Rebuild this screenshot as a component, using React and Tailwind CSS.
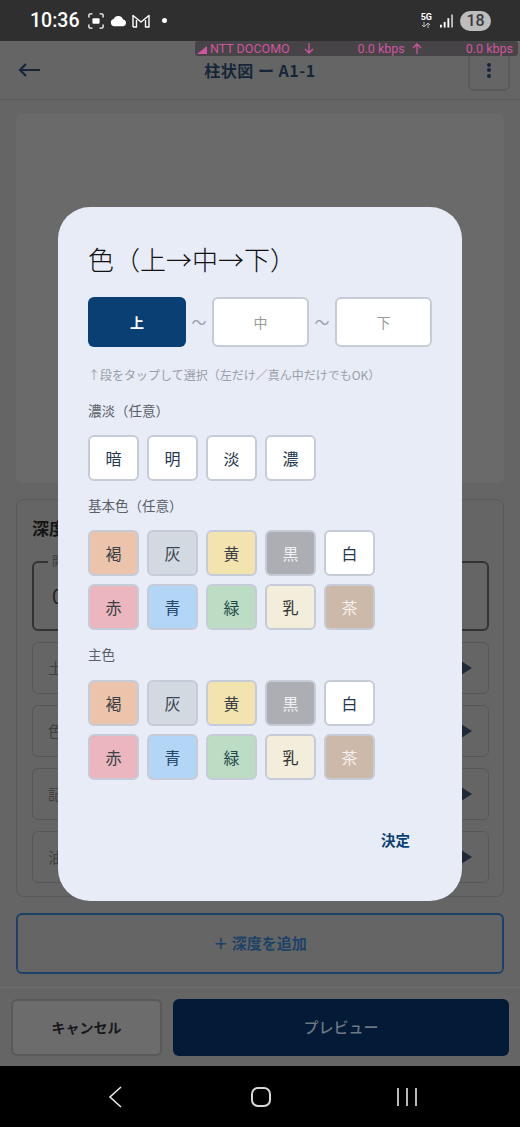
import React from 'react';

const colors = [
  { label: '褐', cls: 'bg-[#ecc4ab] text-[#3a3f47]' },
  { label: '灰', cls: 'bg-[#d3d9e1] text-[#3a4552]' },
  { label: '黄', cls: 'bg-[#f3e3ae] text-[#3a3f47]' },
  { label: '黒', cls: 'bg-[#acaeb3] text-[#eef0f4]' },
  { label: '白', cls: 'bg-white text-[#24384d]' },
  { label: '赤', cls: 'bg-[#ebb6bd] text-[#3a3f47]' },
  { label: '青', cls: 'bg-[#b3d6f6] text-[#24486b]' },
  { label: '緑', cls: 'bg-[#bcdcc4] text-[#24484a]' },
  { label: '乳', cls: 'bg-[#f3eddb] text-[#2f3338]' },
  { label: '茶', cls: 'bg-[#cdb9aa] text-[#f5f1ec]' },
];

function Chip({ label, cls }) {
  return (
    <button className={`w-[51px] h-[46px] rounded-md border-2 border-[#c6ccd7] text-[16px] flex items-center justify-center ${cls}`}>
      {label}
    </button>
  );
}

function ColorGrid() {
  return (
    <div className="grid grid-cols-[repeat(5,51px)] gap-2">
      {colors.map((c) => (
        <Chip key={c.label} label={c.label} cls={c.cls} />
      ))}
    </div>
  );
}

function Row({ label }) {
  return (
    <div className="h-[52px] rounded-md border border-[#575757] flex items-center justify-between pl-[15px] pr-[16px] text-[15px] text-[#404040]">
      <span>{label}</span>
      <svg width="14" height="18" viewBox="0 0 14 18"><path d="M0 0 L14 9 L0 18 Z" fill="#1f2a36" /></svg>
    </div>
  );
}

function StatusBar() {
  return (
    <div className="h-[41px] bg-[#2f2f2f] flex items-center justify-between pl-[30px] pr-[29px] text-white shrink-0 font-['Roboto',sans-serif]">
      <div className="flex items-center">
        <span className="text-[19.5px] font-medium leading-none">10:36</span>
        <svg className="ml-[9px]" width="16" height="16" viewBox="0 0 18 18" fill="none" stroke="white" strokeWidth="1.5">
          <path d="M1 5V2.5A1.5 1.5 0 0 1 2.5 1H5M13 1h2.5A1.5 1.5 0 0 1 17 2.5V5M17 13v2.5a1.5 1.5 0 0 1-1.5 1.5H13M5 17H2.5A1.5 1.5 0 0 1 1 15.5V13" />
          <rect x="5" y="6" width="8" height="6" rx="1" fill="white" stroke="none" />
        </svg>
        <svg className="ml-[6px]" width="17" height="12" viewBox="0 0 18 12" fill="white">
          <path d="M4.5 11.5a3.8 3.8 0 0 1-.6-7.5A5.2 5.2 0 0 1 13.8 4.4 3.6 3.6 0 0 1 14 11.5Z" />
        </svg>
        <svg className="ml-[5px]" width="18" height="14" viewBox="0 0 18 14" fill="none" stroke="white" strokeWidth="1.4">
          <path d="M1 13V1.5L9 8l8-6.5V13h-3.5V6M1 13h3.5V6" strokeLinejoin="round" />
        </svg>
        <span className="ml-[12px] w-[5px] h-[5px] rounded-full bg-white" />
      </div>
      <div className="flex items-center">
        <div className="flex flex-col items-center text-[9px] leading-[9px] font-bold mr-[8px]">
          <span>5G</span>
          <svg width="10" height="6" viewBox="0 0 10 6" fill="none" stroke="#bbbbbb" strokeWidth="1">
            <path d="M3 0v5M1 3l2 2 2-2M7 6V1M5 3l2-2 2 2" />
          </svg>
        </div>
        <svg width="13" height="14" viewBox="0 0 14 14" fill="white" className="mr-[7px]">
          <rect x="0" y="11" width="2" height="3" />
          <rect x="4" y="8" width="2" height="6" />
          <rect x="8" y="4" width="2" height="10" />
          <rect x="12" y="0" width="2" height="14" fill="#bdbdbd" />
        </svg>
        <span className="w-[31px] h-[20px] rounded-full bg-[#bdbdbd] text-[#3a3a3a] text-[16px] font-medium flex items-center justify-center leading-none">18</span>
      </div>
    </div>
  );
}

function Background() {
  return (
    <div className="h-[1025px] bg-[#656565] flex flex-col">
      <div className="h-[59px] border-b border-[#5a5a5a] flex items-center justify-between pl-[18px] pr-[10px] shrink-0">
        <svg width="22" height="14" viewBox="0 0 22 14" fill="none" stroke="#16263a" strokeWidth="2.2">
          <path d="M22 7H2M8 1 2 7l6 6" />
        </svg>
        <span className="ml-[12px] text-[16px] tracking-[0.5px] font-bold text-[#16263a]">柱状図 ー A1-1</span>
        <div className="w-[42px] h-[42px] rounded-md border-2 border-[#5a5a5a] flex flex-col items-center justify-center gap-[1.5px]">
          <span className="w-[4px] h-[4px] rounded-full bg-[#16263a]" />
          <span className="w-[4px] h-[4px] rounded-full bg-[#16263a]" />
          <span className="w-[4px] h-[4px] rounded-full bg-[#16263a]" />
        </div>
      </div>
      <div className="px-[16px] flex flex-col flex-1">
        <div className="mt-[14px] h-[369px] rounded-md bg-[#6a6a6a] shrink-0" />
        <div className="mt-[16px] h-[398px] rounded-lg border border-[#595959] pl-[15px] pr-[14px] shrink-0">
          <div className="text-[17px] leading-[27px] font-bold text-[#141414] mt-[14px] h-[30px]">深度</div>
          <div className="relative mt-[17px] h-[70px] rounded-md border-2 border-[#333333] flex items-center pl-[18px] text-[20px] text-[#222222]">
            0
            <span className="absolute left-[14px] -top-[10px] px-[4px] bg-[#656565] text-[12px] leading-[16px] text-[#3d3d3d]">開始深度</span>
          </div>
          <div className="mt-[11px] flex flex-col gap-[11px]">
            <Row label="土質" />
            <Row label="色" />
            <Row label="記事" />
            <Row label="油" />
          </div>
        </div>
        <div className="mt-[16px] h-[61px] rounded-md border-2 border-[#1d4268] flex items-center justify-center text-[15px] font-bold text-[#1d4268] shrink-0">
          ＋ 深度を追加
        </div>
      </div>
      <div className="mt-[13px] h-[79px] border-t border-[#707070] flex gap-[11px] px-[11px] pt-[11px] shrink-0">
        <div className="w-[151px] h-[57px] rounded-md border-2 border-[#595959] bg-[#6c6c6c] flex items-center justify-center text-[14px] font-bold text-[#16181c]">キャンセル</div>
        <div className="flex-1 h-[57px] rounded-md bg-[#031b36] flex items-center justify-center text-[15px] font-medium text-[#6d7885]">プレビュー</div>
      </div>
    </div>
  );
}

function Dialog() {
  return (
    <div className="absolute left-[58px] top-[207px] w-[404px] h-[694px] rounded-[32px] bg-[#e7ecf7] px-[30px] flex flex-col">
      <h2 className="mt-[32px] h-[40px] text-[26px] leading-[40px] font-light text-[#111111] whitespace-nowrap">色（上→中→下）</h2>
      <div className="mt-[18px] flex items-center">
        <button className="w-[98px] h-[50px] rounded-md bg-[#0a3f73] text-white text-[14px] font-bold">上</button>
        <span className="w-[26px] text-center text-[15px] text-[#9aa1ac]">〜</span>
        <button className="w-[97px] h-[50px] rounded-md border-2 border-[#c6ccd7] bg-white text-[#9a9a9a] text-[14px]">中</button>
        <span className="w-[26px] text-center text-[15px] text-[#9aa1ac]">〜</span>
        <button className="w-[97px] h-[50px] rounded-md border-2 border-[#c6ccd7] bg-white text-[#9a9a9a] text-[14px]">下</button>
      </div>
      <p className="mt-[18px] text-[12px] leading-[20px] text-[#9a9ea6] whitespace-nowrap">↑段をタップして選択（左だけ／真ん中だけでもOK）</p>
      <p className="mt-[15px] text-[13.5px] leading-[20px] text-[#5b6067]">濃淡（任意）</p>
      <div className="mt-[15px] flex gap-2">
        <Chip label="暗" cls="bg-white text-[#24384d]" />
        <Chip label="明" cls="bg-white text-[#24384d]" />
        <Chip label="淡" cls="bg-white text-[#24384d]" />
        <Chip label="濃" cls="bg-white text-[#24384d]" />
      </div>
      <p className="mt-[14px] text-[13.5px] leading-[20px] text-[#5b6067]">基本色（任意）</p>
      <div className="mt-[15px]"><ColorGrid /></div>
      <p className="mt-[14px] text-[13.5px] leading-[20px] text-[#5b6067]">主色</p>
      <div className="mt-[16px]"><ColorGrid /></div>
      <div className="mt-[49px] flex justify-end pr-[22px]">
        <button className="text-[14.5px] leading-[22px] font-bold text-[#0a3f73]">決定</button>
      </div>
    </div>
  );
}

function Arrow({ up }) {
  return (
    <svg width="10" height="11" viewBox="0 0 10 11" fill="none" stroke="#d0559f" strokeWidth="1.3">
      {up ? <path d="M5 11V1M1 5l4-4 4 4" /> : <path d="M5 0v10M1 6l4 4 4-4" />}
    </svg>
  );
}

function NetworkMeter() {
  return (
    <div className="absolute left-[195px] top-[41px] w-[323px] h-[15px] rounded-[3px] bg-[#464446] text-[#d0559f] text-[12.5px] leading-[15px] font-['Roboto',sans-serif] flex items-center pl-[2px] pr-[5px] whitespace-nowrap">
      <svg width="10" height="8" viewBox="0 0 10 8" className="mt-[3px]"><path d="M0 8 10 0V8Z" fill="#d0559f" /></svg>
      <span className="ml-[3px]">NTT DOCOMO</span>
      <span className="ml-[14px]"><Arrow /></span>
      <span className="ml-auto">0.0 kbps</span>
      <span className="ml-[7px]"><Arrow up /></span>
      <span className="ml-[44px]">0.0 kbps</span>
    </div>
  );
}

function NavBar() {
  return (
    <div className="h-[61px] bg-black flex items-center pl-[108px] shrink-0">
      <svg width="14" height="22" viewBox="0 0 14 22" fill="none" stroke="#e8e8e8" strokeWidth="1.6"><path d="M13 1 2 11l11 10" /></svg>
      <div className="ml-[129px] w-[20px] h-[20px] rounded-[7px] border-2 border-[#d8d8d8]" />
      <svg className="ml-[126px]" width="20" height="20" viewBox="0 0 20 20" fill="none" stroke="#e8e8e8" strokeWidth="1.6"><path d="M1 1v18M10 1v18M19 1v18" /></svg>
    </div>
  );
}

export default function App() {
  return (
    <div className="relative w-[520px] h-[1127px] overflow-hidden flex flex-col font-['Noto_Sans_CJK_JP',sans-serif]">
      <StatusBar />
      <Background />
      <NavBar />
      <NetworkMeter />
      <Dialog />
    </div>
  );
}
